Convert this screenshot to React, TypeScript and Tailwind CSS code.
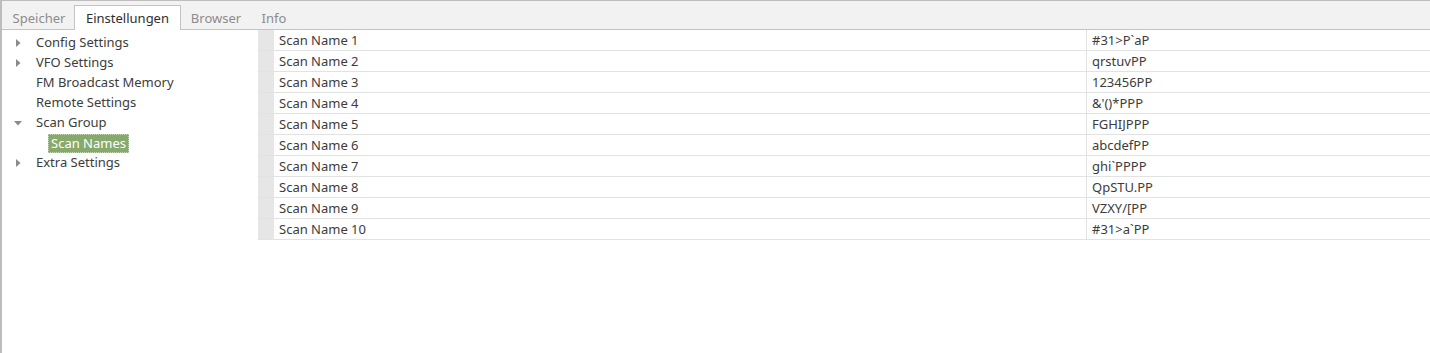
import React from "react";

const rows: [string, string][] = [
  ["Scan Name 1", "#31>P`aP"],
  ["Scan Name 2", "qrstuvPP"],
  ["Scan Name 3", "123456PP"],
  ["Scan Name 4", "&'()*PPP"],
  ["Scan Name 5", "FGHIJPPP"],
  ["Scan Name 6", "abcdefPP"],
  ["Scan Name 7", "ghi`PPPP"],
  ["Scan Name 8", "QpSTU.PP"],
  ["Scan Name 9", "VZXY/[PP"],
  ["Scan Name 10", "#31>a`PP"],
];

function Arrow({ open }: { open?: boolean }) {
  return (
    <svg width="8" height="8" viewBox="0 0 8 8" className="shrink-0">
      {open ? (
        <polygon points="0,2 8,2 4,6.5" fill="#8a8a8a" />
      ) : (
        <polygon points="2,0 6.5,4 2,8" fill="#8a8a8a" />
      )}
    </svg>
  );
}

function TreeItem({
  label,
  arrow,
  indent,
  selected,
}: {
  label: string;
  arrow?: "open" | "closed";
  indent?: boolean;
  selected?: boolean;
}) {
  return (
    <div className="flex h-[20px] items-center">
      <div className="flex w-[34px] justify-start pl-[12px]">
        {arrow ? <Arrow open={arrow === "open"} /> : null}
      </div>
      {indent ? <div className="w-[12px]" /> : null}
      {selected ? (
        <span className="h-[19px] border border-dotted border-[#c8dab8] bg-[#87a96b] px-[2px] leading-[17px] text-white">
          {label}
        </span>
      ) : (
        <span>{label}</span>
      )}
    </div>
  );
}

export default function App() {
  return (
    <div
      className="h-[353px] w-[1430px] overflow-hidden bg-white text-[13px] text-[#3c3c3c]"
      style={{ fontFamily: '"Noto Sans", "Open Sans", sans-serif' }}
    >
      <div className="flex h-full flex-col border-l-[2px] border-t border-[#bdbdbd]">
        {/* tab bar */}
        <div className="flex h-[29px] shrink-0 items-end border-b border-[#c4c4c4] bg-[#f2f2f2] pl-[2px]">
          <div className="flex h-[24px] w-[70px] items-center justify-center pt-[3px] text-[#8c8c8c]">Speicher</div>
          <div className="relative -mb-px flex h-[25px] w-[107px] items-center justify-center border border-b-0 border-[#c4c4c4] bg-white pt-[2px] text-[#2e2e2e]">
            Einstellungen
          </div>
          <div className="flex h-[24px] w-[70px] items-center justify-center pt-[3px] text-[#8c8c8c]">Browser</div>
          <div className="flex h-[24px] w-[46px] items-center justify-center pt-[3px] text-[#8c8c8c]">Info</div>
        </div>
        {/* content */}
        <div className="flex flex-1">
          <div className="w-[256px] shrink-0 pt-[3px]">
            <TreeItem label="Config Settings" arrow="closed" />
            <TreeItem label="VFO Settings" arrow="closed" />
            <TreeItem label="FM Broadcast Memory" />
            <TreeItem label="Remote Settings" />
            <TreeItem label="Scan Group" arrow="open" />
            <TreeItem label="Scan Names" indent selected />
            <TreeItem label="Extra Settings" arrow="closed" />
          </div>
          <div className="flex-1">
            {rows.map(([a, b], i) => (
              <div key={i} className="flex h-[21px] border-b border-[#e2e2e2]">
                <div className="w-[16px] shrink-0 bg-[#e6e6e6]" />
                <div className="flex w-[813px] shrink-0 items-center border-r border-[#e2e2e2] pl-[5px] pt-[2px]">{a}</div>
                <div className="flex flex-1 items-center pl-[5px] pt-[2px]">{b}</div>
              </div>
            ))}
          </div>
        </div>
      </div>
    </div>
  );
}
